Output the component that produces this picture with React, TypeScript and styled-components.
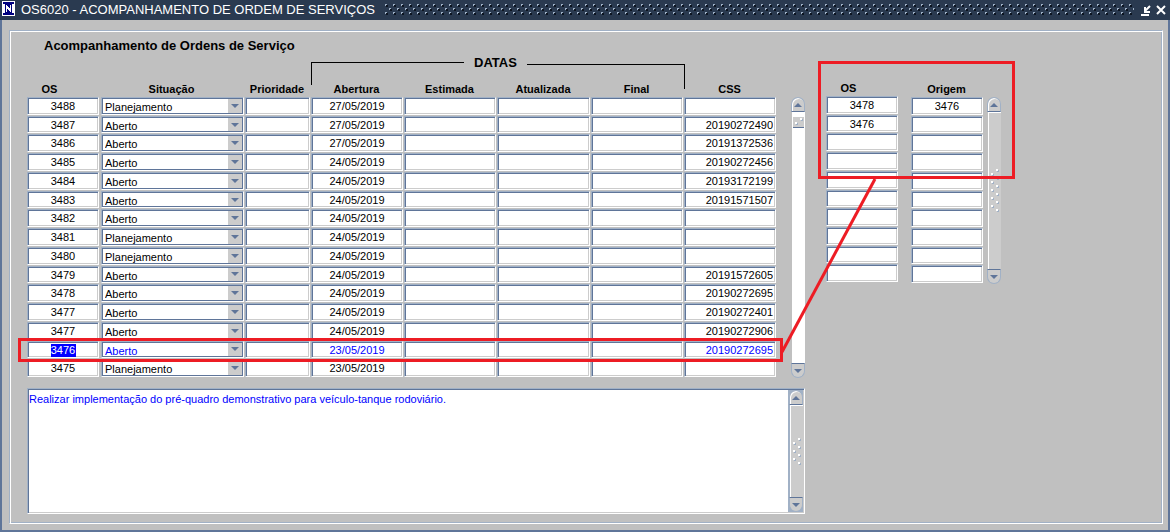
import React from "react";
import styled, { createGlobalStyle, css } from "styled-components";

const GlobalStyle = createGlobalStyle`
  * { box-sizing: border-box; }
  html, body, #root { height: 100%; }
  body {
    margin: 0;
    background: #c0c0c0;
    font-family: "Liberation Sans", Arial, sans-serif;
    font-size: 11px;
    color: #000;
  }
  input, select, textarea, button { font: inherit; color: inherit; margin: 0; padding: 0; }
`;

const DARK = "#5f7599";
const LIGHT = "#a1b1c6";
const GREY = "#cccccc";
const RED = "#ed1c24";
const BLUE = "#0000ff";

const Window = styled.div`
  min-height: 100%;
  display: flex;
  flex-direction: column;
`;

const TitleBar = styled.header`
  display: flex;
  align-items: center;
  height: 20px;
  padding: 0 1px 0 2px;
  background: #2a3a50;
  color: #fff;
`;

const Title = styled.h1`
  margin: 0 10px 0 6px;
  font-size: 13px;
  line-height: 20px;
  font-weight: 400;
  white-space: nowrap;
`;

const Grip = styled.svg`
  flex: 1;
  min-width: 0;
  height: 12px;
  margin-right: 3px;
`;

const TitleButton = styled.button`
  display: flex;
  align-items: center;
  justify-content: center;
  width: 16px;
  height: 16px;
  border: 0;
  background: none;

  svg { flex: none; }
`;

const Frame = styled.div`
  flex: 1;
  display: flex;
  padding: 10px 5px 6px 7px;
  border: solid ${DARK};
  border-width: 0 2px 2px;
`;

const Panel = styled.main`
  flex: 1;
  min-width: 0;
  border: 1px solid ${LIGHT};
  border-right-color: #fff;
  border-bottom-color: #fff;
  box-shadow: inset 1px 1px 0 #fff, inset -1px -1px 0 ${LIGHT};
  padding: 7px 0 8px 17px;
`;

const Heading = styled.h2`
  margin: 0 0 0 17px;
  font-size: 13px;
  line-height: 16px;
  font-weight: 700;
`;

const Columns = styled.div`
  display: grid;
  grid-template-columns: minmax(0, 1fr) 356px;
`;

const ListArea = styled.div`
  display: flex;
  align-items: flex-end;
  gap: 14px;
  padding-right: 1px;
`;

const Table = styled.table`
  flex: 1;
  min-width: 0;
  display: block;
`;

const Head = styled.thead`
  display: block;
`;

const Body = styled.tbody<{ $rows: number; $height: number }>`
  display: grid;
  grid-template-rows: repeat(${(p) => p.$rows}, minmax(0, 1fr));
  height: ${(p) => p.$height}px;
`;

const Row = styled.tr<{ $current?: boolean }>`
  position: relative;
  display: grid;
  grid-template-columns: 73fr 145fr 66fr 93fr 93fr 94fr 93fr 93fr;
  color: ${(p) => (p.$current ? BLUE : "inherit")};
`;

const GroupRow = styled(Row)`
  height: 27px;
`;

const GroupCell = styled.th`
  grid-column: 4 / span 4;
  display: flex;
  gap: 10px;
  padding: 0;
  margin-right: -1px;
  font-size: 13px;
  line-height: 18px;
`;

const BracketLeft = styled.span`
  flex: 152;
  height: 23px;
  margin-top: 8px;
  border: solid #000;
  border-width: 1px 0 0 1px;
`;

const BracketRight = styled.span`
  flex: 157;
  height: 25px;
  margin-top: 10px;
  border: solid #000;
  border-width: 1px 1px 0 0;
`;

const HeadCell = styled.th<{ $shift?: boolean }>`
  height: 16px;
  padding: 0 ${(p) => (p.$shift ? 28 : 2)}px 0 0;
  line-height: 16px;
  font-weight: 700;
  text-align: center;
`;

const Cell = styled.td`
  display: flex;
  min-width: 0;
  min-height: 0;
  padding: 0 1px 1px 0;
`;

const sunken = css`
  background: #fff;
  border: 1px solid ${LIGHT};
  border-right-color: #fff;
  border-bottom-color: #fff;
  box-shadow: inset 1px 1px 0 ${DARK}, inset -1px -1px 0 ${GREY};
`;

const FieldBox = styled.span`
  ${sunken}
  flex: 1;
  min-width: 0;
  display: flex;
  justify-content: center;
  align-items: flex-start;
  padding: 2px;
`;

const Field = styled.input<{ $align?: "center" | "right"; $selected?: boolean }>`
  flex: ${(p) => (p.$selected ? "0 0 25px" : "1")};
  min-width: 0;
  height: 13px;
  line-height: 13px;
  border: 0;
  outline: 0;
  text-align: ${(p) => p.$align ?? "center"};
  background: ${(p) => (p.$selected ? BLUE : "transparent")};
  color: ${(p) => (p.$selected ? "#fff" : "inherit")};
`;

const SelectBox = styled.span`
  ${sunken}
  box-shadow: inset 1px 1px 0 ${DARK}, inset -1px -1px 0 ${DARK};
  flex: 1;
  min-width: 0;
  display: flex;
  position: relative;
  padding: 1px;
  margin-left: 1px;
`;

const Select = styled.select`
  appearance: none;
  flex: 1;
  min-width: 0;
  border: 0;
  outline: 0;
  padding: 2px 0 0 2px;
  line-height: 13px;
  background: transparent;
`;

const Arrow = styled.span`
  position: absolute;
  inset: 1px 1px 1px auto;
  width: 14px;
  display: flex;
  align-items: center;
  justify-content: center;
  background: ${GREY};
  pointer-events: none;
`;

const RowMark = styled.td`
  position: absolute;
  z-index: 1;
  inset: -3px -6px -3px -9px;
  padding: 0;
  border: 3px solid ${RED};
  pointer-events: none;
`;

const ScrollTrack = styled.div<{ $height: number }>`
  flex: none;
  width: 14px;
  height: ${(p) => p.$height}px;
  display: flex;
  flex-direction: column;
`;

const ScrollButton = styled.button<{ $down?: boolean }>`
  flex: 0 0 15px;
  display: flex;
  align-items: center;
  justify-content: center;
  background: ${GREY};
  border: 1px solid ${LIGHT};
  ${(p) =>
    p.$down
      ? css`
          border-top-color: ${DARK};
          border-radius: 0 0 7px 7px;
        `
      : css`
          border-bottom-color: ${DARK};
          border-radius: 7px 7px 0 0;
          box-shadow: inset 1px 1px 0 #fff;
        `}

  svg { flex: none; }
`;

const Trough = styled.div`
  flex: 1;
  background: #fff;
  padding-top: 5px;
  margin-left: 1px;
`;

const Thumb = styled.div<{ $full?: boolean }>`
  display: flex;
  align-items: center;
  justify-content: center;
  background: ${GREY};
  ${(p) =>
    p.$full
      ? css`
          flex: 1;
          border-left: 1px solid #fff;
          border-top: 1px solid #fff;
          margin-left: 1px;
        `
      : css`
          height: 11px;
          margin: 0 1px;
          border-bottom: 1px solid ${DARK};
        `}
`;

const SideArea = styled.div`
  position: relative;
  display: flex;
  align-items: flex-start;
  padding: 26px 0 0 20px;
`;

const SideTable = styled.table<{ $lower?: boolean }>`
  display: block;
  flex: 0 0 73px;
  margin: ${(p) => (p.$lower ? "1px 3px 0 12px" : "0")};
`;

const SideRow = styled.tr`
  display: grid;
`;

const SideScroll = styled.div`
  padding-top: 17px;
`;

const SideMark = styled.div`
  position: absolute;
  top: 7px;
  left: 12px;
  width: 197px;
  height: 118px;
  border: 3px solid ${RED};
  pointer-events: none;
`;

const Connector = styled.svg`
  position: absolute;
  top: 124px;
  left: -26px;
  pointer-events: none;
`;

const Memo = styled.div`
  ${sunken}
  display: flex;
  height: 126px;
  margin: 10px 357px 0 0;
  padding: 1px;
`;

const MemoText = styled.textarea`
  flex: 1;
  min-width: 0;
  border: 0;
  outline: 0;
  resize: none;
  padding: 2px 0 0 0;
  line-height: 14px;
  color: ${BLUE};
  background: transparent;
`;

const MemoScroll = styled.div`
  display: flex;
  background: ${LIGHT};
  padding-left: 1px;
`;

const Triangle = ({ down }: { down?: boolean }) => (
  <svg width="8" height="4" viewBox="0 0 8 4" aria-hidden="true">
    <path d={down ? "M0 0h8L4 4z" : "M0 4h8L4 0z"} fill={DARK} />
  </svg>
);

const Dots = ({ rows }: { rows: number }) => (
  <svg width="8" height={rows * 4} aria-hidden="true" shapeRendering="crispEdges">
    {Array.from({ length: rows }, (_, i) => {
      const x = i % 2 ? 0 : 5;
      return (
        <g key={i}>
          <rect x={x + 1} y={i * 4 + 1} width="2" height="2" fill={LIGHT} />
          <rect x={x} y={i * 4} width="2" height="2" fill="#fff" />
        </g>
      );
    })}
  </svg>
);

type Item = [string, string, string, string];
const P = "Planejamento";
const A = "Aberto";
const items: Item[] = [
  ["3488", P, "27/05/2019", ""],
  ["3487", A, "27/05/2019", "20190272490"],
  ["3486", A, "27/05/2019", "20191372536"],
  ["3485", A, "24/05/2019", "20190272456"],
  ["3484", A, "24/05/2019", "20193172199"],
  ["3483", A, "24/05/2019", "20191571507"],
  ["3482", A, "24/05/2019", ""],
  ["3481", P, "24/05/2019", ""],
  ["3480", P, "24/05/2019", ""],
  ["3479", A, "24/05/2019", "20191572605"],
  ["3478", A, "24/05/2019", "20190272695"],
  ["3477", A, "24/05/2019", "20190272401"],
  ["3477", A, "24/05/2019", "20190272906"],
  ["3476", A, "23/05/2019", "20190272695"],
  ["3475", P, "23/05/2019", ""],
];
const CURRENT = 13;

const TextCell = ({
  label,
  value = "",
  align,
  selected,
}: {
  label: string;
  value?: string;
  align?: "center" | "right";
  selected?: boolean;
}) => (
  <Cell>
    <FieldBox>
      <Field aria-label={label} defaultValue={value} $align={align} $selected={selected} />
    </FieldBox>
  </Cell>
);

const Side = ({ title, values, lower }: { title: string; values: string[]; lower?: boolean }) => (
  <SideTable $lower={lower} cellSpacing={0}>
    <Head>
      <SideRow>
        <HeadCell $shift={!lower}>{title}</HeadCell>
      </SideRow>
    </Head>
    <Body $rows={10} $height={187}>
      {Array.from({ length: 10 }, (_, i) => (
        <SideRow key={i}>
          <TextCell label={`${title} ${i + 1}`} value={values[i]} />
        </SideRow>
      ))}
    </Body>
  </SideTable>
);

export default function App() {
  return (
    <Window>
      <GlobalStyle />
      <TitleBar>
        <svg width="13" height="18" viewBox="0 0 13 18" shapeRendering="crispEdges" aria-hidden="true">
          <path d="M0 0h13v15H0z" fill="#fff" />
          <path d="M1 1h11v2H1zM1 12h11v2H1zM3 3h7v9H3z" fill="#000080" />
          <path d="M4 4h1l3 4V4h1v7H8L5 7v4H4z" fill="#fff" />
        </svg>
        <Title>OS6020 - ACOMPANHAMENTO DE ORDEM DE SERVIÇOS</Title>
        <Grip aria-hidden="true" shapeRendering="crispEdges">
          <defs>
            <pattern id="grip" width="8" height="8" patternUnits="userSpaceOnUse">
              <path d="M1 1h2v2H1zM5 5h2v2H5z" fill="#0c1420" />
              <path d="M0 0h2v1H1v1H0zM4 4h2v1H5v1H4z" fill="#9fb1c6" />
            </pattern>
          </defs>
          <rect width="100%" height="12" fill="url(#grip)" />
        </Grip>
        <TitleButton aria-label="Restaurar">
          <svg width="11" height="11" viewBox="0 0 11 11" fill="none" stroke="#fff" strokeWidth="2">
            <path d="M10 1L5 6M5 2v5h5M1 10h8" />
          </svg>
        </TitleButton>
        <TitleButton aria-label="Fechar">
          <svg width="10" height="10" viewBox="0 0 10 10" stroke="#fff" strokeWidth="2">
            <path d="M1 1l8 8M9 1L1 9" />
          </svg>
        </TitleButton>
      </TitleBar>
      <Frame>
        <Panel>
          <Heading>Acompanhamento de Ordens de Serviço</Heading>
          <Columns>
            <ListArea>
              <Table cellSpacing={0}>
                <Head>
                  <GroupRow>
                    <GroupCell colSpan={4}>
                      <BracketLeft />
                      <span>DATAS</span>
                      <BracketRight />
                    </GroupCell>
                  </GroupRow>
                  <Row>
                    <HeadCell $shift>OS</HeadCell>
                    <HeadCell>Situação</HeadCell>
                    <HeadCell>Prioridade</HeadCell>
                    <HeadCell>Abertura</HeadCell>
                    <HeadCell>Estimada</HeadCell>
                    <HeadCell>Atualizada</HeadCell>
                    <HeadCell>Final</HeadCell>
                    <HeadCell>CSS</HeadCell>
                  </Row>
                </Head>
                <Body $rows={15} $height={281}>
                  {items.map(([os, status, opened, code], i) => (
                    <Row key={i} $current={i === CURRENT}>
                      <TextCell label="OS" value={os} selected={i === CURRENT} />
                      <Cell>
                        <SelectBox>
                          <Select aria-label="Situação" defaultValue={status}>
                            <option>{A}</option>
                            <option>{P}</option>
                          </Select>
                          <Arrow>
                            <Triangle down />
                          </Arrow>
                        </SelectBox>
                      </Cell>
                      <TextCell label="Prioridade" />
                      <TextCell label="Abertura" value={opened} />
                      <TextCell label="Estimada" />
                      <TextCell label="Atualizada" />
                      <TextCell label="Final" />
                      <TextCell label="CSS" value={code} align="right" />
                      {i === CURRENT && <RowMark aria-hidden="true" />}
                    </Row>
                  ))}
                </Body>
              </Table>
              <ScrollTrack $height={281}>
                <ScrollButton aria-label="Subir">
                  <Triangle />
                </ScrollButton>
                <Trough>
                  <Thumb>
                    <Dots rows={2} />
                  </Thumb>
                </Trough>
                <ScrollButton $down aria-label="Descer">
                  <Triangle down />
                </ScrollButton>
              </ScrollTrack>
            </ListArea>
            <SideArea>
              <Side title="OS" values={["3478", "3476"]} />
              <Side title="Origem" values={["3476"]} lower />
              <SideScroll>
                <ScrollTrack $height={187}>
                  <ScrollButton aria-label="Subir">
                    <Triangle />
                  </ScrollButton>
                  <Thumb $full>
                    <Dots rows={11} />
                  </Thumb>
                  <ScrollButton $down aria-label="Descer">
                    <Triangle down />
                  </ScrollButton>
                </ScrollTrack>
              </SideScroll>
              <SideMark />
              <Connector width="98" height="178" aria-hidden="true">
                <path d="M95 1L2 174" stroke={RED} strokeWidth="3" />
              </Connector>
            </SideArea>
          </Columns>
          <Memo>
            <MemoText
              aria-label="Descrição"
              defaultValue="Realizar implementação do pré-quadro demonstrativo para veículo-tanque rodoviário."
            />
            <MemoScroll>
              <ScrollTrack $height={122}>
                <ScrollButton aria-label="Subir">
                  <Triangle />
                </ScrollButton>
                <Thumb $full>
                  <Dots rows={7} />
                </Thumb>
                <ScrollButton $down aria-label="Descer">
                  <Triangle down />
                </ScrollButton>
              </ScrollTrack>
            </MemoScroll>
          </Memo>
        </Panel>
      </Frame>
    </Window>
  );
}
